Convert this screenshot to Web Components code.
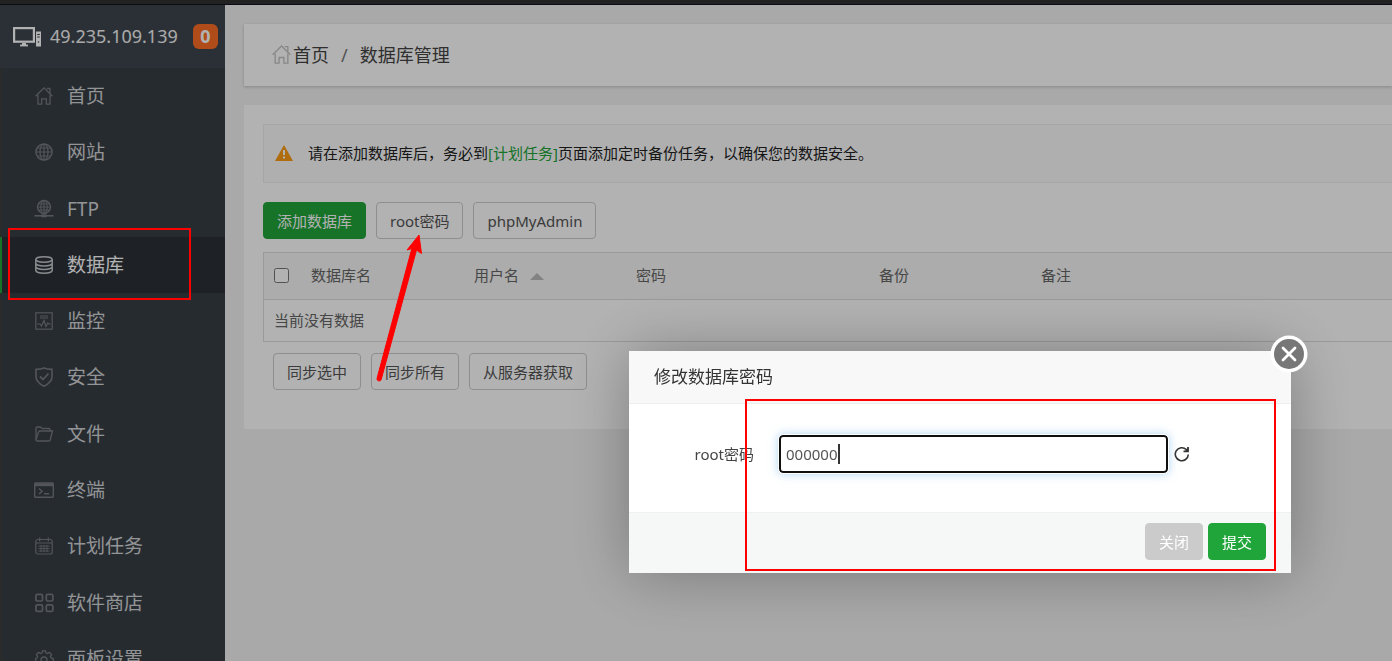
<!DOCTYPE html>
<html lang="zh-CN">
<head>
<meta charset="utf-8">
<meta name="viewport" content="width=device-width, initial-scale=1">
<title>数据库管理</title>
<style>
html, body { margin: 0; height: 100%; }
body { font: 15px/20px "Noto Sans", "Noto Sans CJK SC", sans-serif; color: #333; background: #f2f2f2; overflow: hidden; }
</style>
</head>
<body>
<panel-app></panel-app>
<script>
const ICONS = {
  host: '<svg viewBox="0 0 29 20" width="29" height="20" fill="none" stroke="currentColor"><rect x="1.100" y="1.100" width="19.800" height="13.600" stroke-width="2.200"/><path d="M7 18.500h8" stroke-width="1.800"/><path d="M9 17h4" stroke-width="2"/><path d="M23 4.500h5v15h-5z" fill="currentColor" stroke="none"/><path d="M24.200 7.500h2.600M24.200 10h2.600" stroke="#3c444d"/><circle cx="25.500" cy="15" r=".8" fill="#3c444d" stroke="none"/></svg>',
  home: '<svg viewBox="0 0 18 18" fill="none" stroke="currentColor" stroke-width="1.300"><path d="M.6 9.300 9 .9l8.400 8.400"/><path d="M12 1.500h3v5"/><path d="M3 8v9.200h3.700v-5.400h4.600v5.400H15V8"/></svg>',
  globe: '<svg viewBox="0 0 18 18" fill="none" stroke="currentColor" stroke-width="1.200"><circle cx="9" cy="9" r="8" stroke-width="1.500"/><ellipse cx="9" cy="9" rx="4" ry="8"/><path d="M9 1v16M1 9h16M2.500 5h13M2.500 13h13"/></svg>',
  ftp: '<svg viewBox="0 0 18 18" fill="none" stroke="currentColor" stroke-width="1.100"><circle cx="9" cy="7" r="6.500" stroke-width="1.400"/><ellipse cx="9" cy="7" rx="3.200" ry="6.500"/><path d="M9 .5v13M2.500 7h13M3.500 4h11M3.500 10h11"/><path d="M-.5 15.800h19" stroke-width="1.600"/><path d="M6.500 15.800h5" stroke-width="3"/></svg>',
  db: '<svg viewBox="0 0 18 18" fill="none" stroke="currentColor" stroke-width="1.500"><ellipse cx="9" cy="3.500" rx="8.200" ry="2.700"/><path d="M.8 3.500v11c0 1.500 3.700 2.700 8.200 2.700s8.200-1.200 8.200-2.700v-11M.8 7.200c0 1.500 3.700 2.700 8.200 2.700s8.200-1.200 8.200-2.700M.8 10.800c0 1.500 3.700 2.700 8.200 2.700s8.200-1.200 8.200-2.700"/></svg>',
  monitor: '<svg viewBox="0 0 18 18" fill="none" stroke="currentColor" stroke-width="1.200"><rect x=".8" y=".8" width="16.400" height="16.400"/><path d="M5 4h8M5 6h8"/><path d="M2 12h3l1.500 2L9 8.500l2 6 1.800-3.500 1 1H16"/></svg>',
  shield: '<svg viewBox="0 0 18 18" fill="none" stroke="currentColor" stroke-width="1.600"><path d="M9 0c2.500 1.200 5 1.400 8 1.400v7.100c0 4.500-3.500 7.500-8 9.700-4.500-2.200-8-5.200-8-9.700V1.400C4 1.400 6.500 1.200 9 0z"/><path d="m5 8.500 3 3 5.500-6" stroke-width="1.800"/></svg>',
  folder: '<svg viewBox="0 0 18 18" fill="none" stroke="currentColor" stroke-width="1.300"><path d="M1 14.500V3q0-1 1-1h3.500l1.800 1.500H14q1 0 1 1v1.500"/><path d="M5 6h12.500L15.200 15q-.3 1-1.200 1H2.200Q1 16 1 15q0-.4.200-1L3.600 7q.3-1 1.400-1z"/></svg>',
  term: '<svg viewBox="0 0 18 18" fill="none" stroke="currentColor" stroke-width="1.400"><rect x="-.3" y="2" width="18.600" height="14.300" rx=".8"/><path d="M0 3.800h18" stroke-width="2.800"/><path d="M4 7.500 7.200 10.200 4 13M9 12.700h5"/></svg>',
  calendar: '<svg viewBox="0 0 18 18" fill="none" stroke="currentColor" stroke-width="1.200"><rect x=".8" y="2.500" width="16.400" height="14.500" rx="2"/><path d="M1 6h16M4.700.5v4M13.300.5v4"/><path d="M3.500 9h11M3.500 11.500h11M3.500 14h11M6 8v7M9 8v7M12 8v7" stroke-width=".9"/></svg>',
  apps: '<svg viewBox="0 0 18 18" fill="none" stroke="currentColor" stroke-width="1.700"><rect x=".9" y=".4" width="6.600" height="6.600" rx="1.500"/><rect x="11.300" y=".4" width="6.600" height="6.600" rx="1.500"/><rect x=".9" y="10.800" width="6.600" height="6.600" rx="1.500"/><rect x="11.300" y="10.800" width="6.600" height="6.600" rx="1.500"/></svg>',
  gear: '<svg viewBox="0 0 18 18" fill="none" stroke="currentColor" stroke-width="1.300"><path d="M7.500.8h3l.5 2.100 1.600.7 1.900-1.200 2.100 2.100-1.200 1.900.7 1.600 2.100.5v3l-2.100.5-.7 1.600 1.200 1.900-2.100 2.100-1.900-1.200-1.600.7-.5 2.100h-3L7 17.100l-1.600-.7-1.900 1.200-2.100-2.100 1.200-1.900-.7-1.600-1.200-.5v-3l1.200-.5.7-1.600-1.200-1.900 2.100-2.100 1.900 1.200L7 2.900z"/><circle cx="9" cy="10" r="3"/></svg>'
};

function define(name, html, setup) {
  const tpl = document.createElement('template');
  tpl.innerHTML = html;
  customElements.define(name, class extends HTMLElement {
    connectedCallback() {
      if (this.shadowRoot) return;
      this.attachShadow({ mode: 'open' }).append(tpl.content.cloneNode(true));
      if (setup) setup(this, this.shadowRoot);
    }
  });
}

define('ui-icon', `<style>
  :host { display: block; flex: none; width: 18px; height: 18px; }
  svg { display: block; width: 100%; height: 100%; overflow: visible; }
</style>`, (el, root) => root.append(document.createRange().createContextualFragment(ICONS[el.getAttribute('name')])));

define('ui-button', `<style>
  :host { display: block; }
  button { display: block; box-sizing: border-box; height: 37px; padding: 0 13px; margin: 0; font: inherit; line-height: 20px;
    color: #555; background: #fff; border: 1px solid #ccc; border-radius: 4px; white-space: nowrap; }
  :host([kind=primary]) button { color: #fff; background: #20a53a; border-color: #20a53a; }
  :host([kind=mute]) button { color: #fff; background: #cbcbcb; border-color: #cbcbcb; }
</style><button type="button"><slot></slot></button>`);

define('side-item', `<style>
  :host { display: block; }
  a { display: flex; align-items: center; gap: 14px; height: 100%; box-sizing: border-box; padding-left: 33px; border-left: 2px solid #3c3f3e;
    font-size: 19px; line-height: 28px; color: #d3d5d7; text-decoration: none; white-space: nowrap; }
  ui-icon { color: #777b80; }
  :host([active]) a { background: #2c3138; border-color: #20a53a; color: #fff; }
  :host([active]) ui-icon { color: #c4c6c9; }
</style><a href="#"><span><slot></slot></span></a>`,
  (el, root) => {
    const icon = document.createElement('ui-icon');
    icon.setAttribute('name', el.getAttribute('icon'));
    const link = root.querySelector('a');
    link.prepend(icon);
    if (el.hasAttribute('active')) link.setAttribute('aria-current', 'page');
  });

define('side-bar', `<style>
  :host { display: block; background: #373e46; overflow: hidden; }
  header { display: flex; align-items: center; height: 63px; box-sizing: border-box; padding: 0 7px 0 13px; background: #3e464e; color: #fff; }
  svg { flex: none; }
  .ip { font-size: 18px; line-height: 24px; margin-left: 8px; padding-bottom: 2px; color: #f4f4f4; }
  .count { margin-left: auto; width: 25px; height: 25px; border-radius: 6px; background: #fc6d26; font-weight: 700; font-size: 18px; line-height: 24px; text-align: center; }
  nav { display: grid; grid-auto-rows: 1fr; height: 619px; }
</style>
<header>${ICONS.host}<span class="ip">49.235.109.139</span><span class="count">0</span></header>
<nav>
  <side-item icon="home">首页</side-item>
  <side-item icon="globe">网站</side-item>
  <side-item icon="ftp">FTP</side-item>
  <side-item icon="db" active>数据库</side-item>
  <side-item icon="monitor">监控</side-item>
  <side-item icon="shield">安全</side-item>
  <side-item icon="folder">文件</side-item>
  <side-item icon="term">终端</side-item>
  <side-item icon="calendar">计划任务</side-item>
  <side-item icon="apps">软件商店</side-item>
  <side-item icon="gear">面板设置</side-item>
</nav>`);

define('crumb-bar', `<style>
  :host { display: flex; align-items: center; height: 62px; padding-left: 28px; background: #fff; box-shadow: 0 1px 3px rgba(0,0,0,.2);
    font-size: 18px; line-height: 26px; color: #444; }
  a { display: flex; align-items: center; gap: 2px; color: inherit; text-decoration: none; }
  ui-icon { color: #c4c4c4; width: 19px; height: 19px; margin-bottom: 2px; }
  i { font-style: normal; margin: 0 12px; color: #777; }
</style><a href="#"><ui-icon name="home"></ui-icon>首页</a><i>/</i><span>数据库管理</span>`);

define('notice-bar', `<style>
  :host { display: flex; align-items: center; gap: 15px; height: 57px; padding-left: 11px; background: #fbfbfb; border: 1px solid #eee; border-right: 0; color: #222; }
  svg { flex: none; margin-bottom: 2px; }
  span { padding-bottom: 2px; }
  ::slotted(a) { color: #20a53a; text-decoration: none; }
</style>
<svg width="18" height="16" viewBox="0 0 18 16"><path d="M9 0 18 16H0z" fill="#fc9c15"/><path d="M9 5v5M9 11.500v2" stroke="#fff" stroke-width="2"/></svg>
<span><slot></slot></span>`);

define('db-table', `<style>
  :host { display: block; border: 1px solid #ddd; border-right: 0; }
  table { width: 100%; table-layout: fixed; border-collapse: collapse; color: #666; }
  th, td { text-align: left; font-weight: 400; padding: 0 10px 2px; }
  th { height: 44px; background: #f6f6f6; white-space: nowrap; }
  td { height: 39px; border-top: 1px solid #ddd; }
  input { display: block; width: 15px; height: 15px; margin: 0; }
  svg { margin-left: 11px; }
  .c0 { width: 37px; } .c1 { width: 163px; } .c2 { width: 162px; } .c3 { width: 243px; }
</style>
<table>
  <colgroup><col class="c0"><col class="c1"><col class="c2"><col class="c3"><col class="c2"><col></colgroup>
  <thead><tr><th><input type="checkbox" aria-label="全选"></th><th>数据库名</th>
  <th>用户名<svg width="14" height="8" viewBox="0 0 14 8"><path d="M7 0 14 7H0z" fill="#bbb"/></svg></th><th>密码</th><th>备份</th><th>备注</th></tr></thead>
  <tbody><tr><td colspan="6">当前没有数据</td></tr></tbody>
</table>`);

define('db-panel', `<style>
  :host { display: block; background: #fff; padding: 19px 0 39px 19px; }
  .bar { display: flex; gap: 10px; margin: 19px 0 13px; }
  .foot { margin: 11px 0 0 10px; }
</style>
<notice-bar>请在添加数据库后，务必到<a href="#">[计划任务]</a>页面添加定时备份任务，以确保您的数据安全。</notice-bar>
<div class="bar"><ui-button kind="primary">添加数据库</ui-button><ui-button>root密码</ui-button><ui-button>phpMyAdmin</ui-button></div>
<db-table></db-table>
<div class="bar foot"><ui-button>同步选中</ui-button><ui-button>同步所有</ui-button><ui-button>从服务器获取</ui-button></div>`);

define('pass-dialog', `<style>
  :host { display: block; width: 662px; border-radius: 2px; background: #fff; box-shadow: 1px 1px 62px rgba(0,0,0,.3); }
  h2 { margin: 0; padding: 13px 25px; font-size: 17px; font-weight: 400; line-height: 26px; background: #f8f8f8; border-bottom: 1px solid #eee; color: #333; }
  form { display: flex; align-items: center; padding: 31px 0 39px; }
  label { width: 125px; text-align: right; margin-right: 25px; color: #444; }
  .field { position: relative; }
  input { display: block; box-sizing: border-box; width: 389px; height: 38px; margin: 0; padding: 0 5px; font: inherit; color: #555; background: #fff;
    border: 2px solid #101010; border-radius: 4px; outline: 1px solid #fff; box-shadow: 0 0 10px 1px rgba(102,175,233,.5); }
  .caret { position: absolute; left: 59px; top: 9px; width: 2px; height: 20px; background: #333; }
  .redo { padding: 0; margin: 0 0 1px 6px; border: 0; background: none; width: 16px; height: 16px; color: #333; }
  .redo svg, .close svg { display: block; }
  footer { display: flex; justify-content: flex-end; gap: 5px; padding: 10px 25px 13px; background: #f6f8f7; border-top: 1px solid #edf1f2; }
  .close { position: absolute; right: -17px; top: -16px; padding: 0; border: 0; background: none; width: 38px; height: 38px; }
</style>
<h2>修改数据库密码</h2>
<form><label for="pw">root密码</label>
  <div class="field"><input id="pw" type="text" value="000000"><span class="caret"></span></div>
  <button class="redo" type="button" aria-label="随机密码"><svg width="16" height="16" viewBox="0 0 16 16" fill="none" stroke="currentColor" stroke-width="1.600"><path d="M14.300 8.500a6.500 6.500 0 1 1-2-5L13.500 5"/><path d="M14 1v4.300H9.500" stroke-width="1.800"/><path d="m11 4.500 3-2.500v3.300z" fill="currentColor" stroke="none"/></svg></button>
</form>
<footer><ui-button kind="mute">关闭</ui-button><ui-button kind="primary">提交</ui-button></footer>
<button class="close" type="button" aria-label="关闭窗口"><svg width="38" height="38" viewBox="0 0 38 38"><circle cx="19" cy="19" r="18.500" fill="#fff"/><circle cx="19" cy="19" r="15" fill="#777"/><path d="m13 13 12 12M25 13 13 25" stroke="#fff" stroke-width="2.800" stroke-linecap="round"/></svg></button>`);

define('mark-layer', `<style>
  :host { position: fixed; inset: 0; pointer-events: none; }
  svg { display: block; width: 100%; height: 100%; }
</style>
<svg fill="none" stroke="#f00" stroke-width="2"><rect x="9" y="229" width="181" height="70"/><rect x="746" y="400" width="529" height="170"/>
<path d="M419 235 421.500 253.500 416.500 250 381.200 379.600A2.200 2.200 0 0 1 377 378.400L411.800 248.600 407 250z" fill="#f00" stroke-width="1" stroke-linejoin="round"/></svg>`);

define('panel-app', `<style>
  :host { display: flex; flex-direction: column; height: 100%; }
  .top { flex: none; height: 4px; background: #323232; border-bottom: 1px solid #111120; }
  .page { flex: 1; min-height: 0; display: grid; grid-template-columns: 225px 1fr; grid-template-rows: 100%; }
  main { display: flex; flex-direction: column; gap: 19px; padding: 19px 0 0 19px; min-width: 0; }
  .shade { position: fixed; inset: 0; background: rgba(0,0,0,.3); pointer-events: none; }
  pass-dialog { position: fixed; right: 101px; top: 351px; }
</style>
<div class="top"></div>
<div class="page"><side-bar></side-bar><main><crumb-bar></crumb-bar><db-panel></db-panel></main></div>
<div class="shade"></div>
<pass-dialog role="dialog" aria-label="修改数据库密码"></pass-dialog>
<mark-layer></mark-layer>`);
</script>
</body>
</html>
